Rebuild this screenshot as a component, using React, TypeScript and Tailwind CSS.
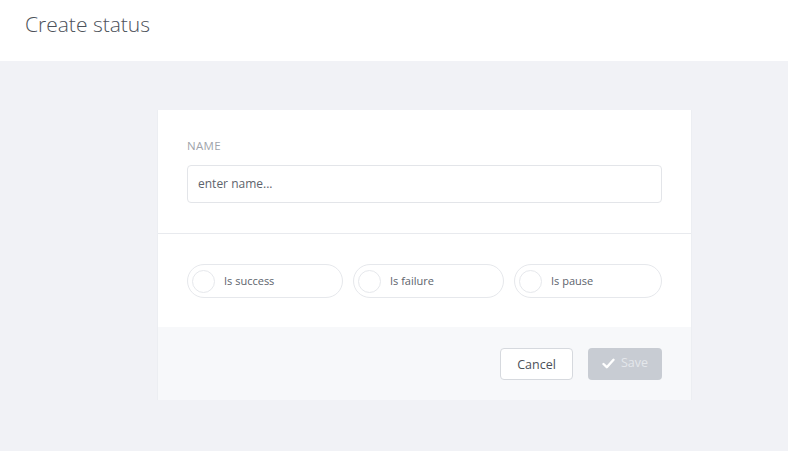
import React from "react";

const font = { fontFamily: '"Open Sans", "Noto Sans", sans-serif' };

function Pill({ label, w }: { label: string; w: string }) {
  return (
    <div className={`${w} h-[34px] rounded-full border border-[#e6e8ec] flex items-center pl-[4px] bg-white`}>
      <div className="w-[23px] h-[23px] rounded-full border border-[#e6e8ec]" />
      <span className="ml-[9px] text-[11px] text-[#5d636c]">{label}</span>
    </div>
  );
}

export default function App() {
  return (
    <div className="w-[788px] h-[451px] bg-[#f1f2f6] flex flex-col" style={font}>
      <div className="h-[61px] bg-white flex items-center pl-[25px] shrink-0">
        <h1 className="text-[21px] font-light text-[#4c5159] -mt-[12px]">Create status</h1>
      </div>
      <div className="flex pt-[49px] pl-[157px]">
        <div className="w-[535px] bg-white border-x border-[#eceef2]">
          <div className="px-[29px] pt-[29px] pb-[30px] border-b border-[#e8eaee]">
            <div className="text-[11.5px] text-[#a0a4ab] tracking-[0.3px] leading-[14px]">NAME</div>
            <div className="mt-[12px] h-[38px] rounded-[4px] border border-[#e3e5e9] flex items-center pl-[10px]">
              <span className="text-[12px] text-[#5d636c]">enter name...</span>
            </div>
          </div>
          <div className="px-[29px] pt-[30px] pb-[29px] flex gap-[10px]">
            <Pill label="Is success" w="w-[156px]" />
            <Pill label="Is failure" w="w-[151px]" />
            <Pill label="Is pause" w="w-[148px]" />
          </div>
          <div className="bg-[#f7f8fa] h-[73px] flex items-center justify-end pr-[29px] gap-[15px]">
            <button className="w-[73px] h-[32px] rounded-[4px] border border-[#d6d9de] bg-white text-[12.5px] text-[#4c5159] pt-[3px]">
              Cancel
            </button>
            <button className="w-[74px] h-[32px] rounded-[4px] bg-[#c8ccd3] text-[12.5px] text-[#e4e7eb] flex items-center justify-center gap-[6px]">
              <svg width="13" height="11" viewBox="0 0 13 11">
                <path d="M1.5 6 L4.8 9.2 L11.5 1.8" stroke="#ffffff" strokeWidth="2.4" fill="none" strokeLinecap="round" strokeLinejoin="round" />
              </svg>
              Save
            </button>
          </div>
        </div>
      </div>
    </div>
  );
}
